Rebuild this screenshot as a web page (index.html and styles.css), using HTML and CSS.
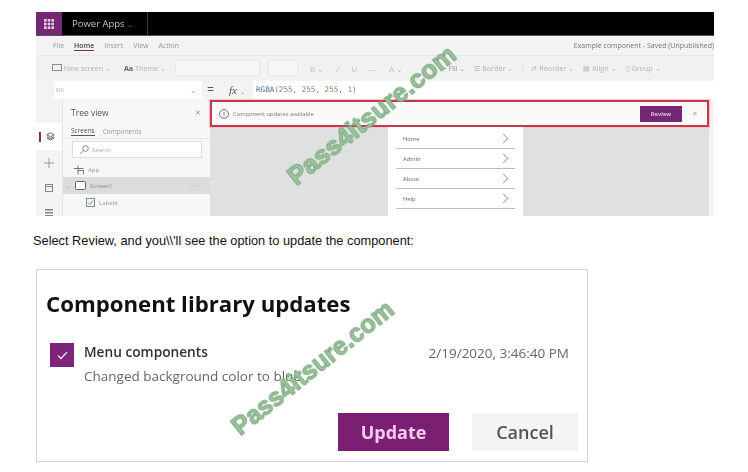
FILE: index.html
```html
<!DOCTYPE html>
<html lang="en">
<head>
    <meta charset="UTF-8">
    <meta name="viewport" content="width=device-width, initial-scale=1.0">
    <title>Component library updates</title>
    <link rel="stylesheet" href="styles.css">
</head>
<body>
    <div class="shot">
        <div class="topbar">
            <div class="waffle">
                <svg width="10" height="10" viewBox="0 0 10 10" fill="#e8cfe6"><rect width="2.6" height="2.6"/><rect x="3.7" width="2.6" height="2.6"/><rect x="7.4" width="2.6" height="2.6"/><rect y="3.7" width="2.6" height="2.6"/><rect x="3.7" y="3.7" width="2.6" height="2.6"/><rect x="7.4" y="3.7" width="2.6" height="2.6"/><rect y="7.4" width="2.6" height="2.6"/><rect x="3.7" y="7.4" width="2.6" height="2.6"/><rect x="7.4" y="7.4" width="2.6" height="2.6"/></svg>
            </div>
            <div class="app-name">Power Apps <span class="app-caret">&#8964;</span></div>
        </div>

        <div class="menubar">
            <span>File</span>
            <span class="menu-active">Home</span>
            <span>Insert</span>
            <span>View</span>
            <span>Action</span>
            <span class="saved">Example component - Saved (Unpublished)</span>
        </div>

        <div class="toolbar">
            <span class="tool">
                <svg width="10" height="8" viewBox="0 0 10 8" fill="none" stroke="#8a8a8a"><rect x=".5" y=".5" width="9" height="6"/></svg>
                New screen &#8964;
            </span>
            <span class="tool tool-theme"><b>Aa</b> Theme &#8964;</span>
            <span class="tool-select"></span>
            <span class="tool-select tool-select-small"></span>
            <span class="tool tool-letters">B &#8964;</span>
            <span class="tool tool-letters">/</span>
            <span class="tool tool-letters">U</span>
            <span class="tool tool-letters">&#8212;</span>
            <span class="tool tool-letters">A &#8964;</span>
            <span class="tool tool-fill">&#9683; Fill &#8964;</span>
            <span class="tool">&#9776; Border &#8964;</span>
            <span class="tool tool-split">&#8634; Reorder &#8964;</span>
            <span class="tool">&#9636; Align &#8964;</span>
            <span class="tool">&#9647; Group &#8964;</span>
        </div>

        <div class="formula">
            <div class="prop-box">Fill <span class="prop-caret">&#8964;</span></div>
            <span class="equals">=</span>
            <span class="fx"><i>fx</i> <small>&#8964;</small></span>
            <span class="code"><b>RGBA</b>(255, 255, 255, 1)</span>
        </div>

        <div class="workspace">
            <div class="rail">
                <div class="rail-item rail-selected">
                    <span class="rail-mark"></span>
                    <svg width="9" height="9" viewBox="0 0 9 9" fill="none" stroke="#666"><path d="M4.5.8 8.2 2.8 4.5 4.8.8 2.8Z"/><path d="M.8 4.6 4.5 6.6 8.2 4.6M.8 6 4.5 8 8.2 6"/></svg>
                </div>
                <div class="rail-item">
                    <svg width="10" height="10" viewBox="0 0 10 10" stroke="#999"><path d="M5 0v10M0 5h10"/></svg>
                </div>
                <div class="rail-item">
                    <svg width="8" height="9" viewBox="0 0 8 9" fill="none" stroke="#888"><rect x=".5" y="1.5" width="7" height="7"/><path d="M.5 3.5h7"/></svg>
                </div>
                <div class="rail-item">
                    <svg width="8" height="9" viewBox="0 0 8 9" fill="#888"><path d="M0 1h8v1.400H0zM0 4h8v1.400H0zM0 7h8v1.400H0z"/></svg>
                </div>
            </div>

            <div class="tree">
                <div class="tree-head"><span>Tree view</span><span class="tree-close">&#10005;</span></div>
                <div class="tree-tabs">
                    <span class="tree-tab-active">Screens</span>
                    <span>Components</span>
                </div>
                <div class="tree-search">
                    <svg width="9" height="9" viewBox="0 0 9 9" fill="none" stroke="#888"><circle cx="5.500" cy="3.500" r="2.800"/><path d="M3.500 5.500.5 8.500"/></svg>
                    Search
                </div>
                <div class="tree-row tree-row-app">
                    <svg width="11" height="10" viewBox="0 0 11 10" fill="none" stroke="#777"><path d="M.5 3.500h4.500v6M5 .5v3h5.500M5 5.500h5.500v4"/></svg>
                    App
                </div>
                <div class="tree-row tree-row-selected">
                    <span class="tree-caret">&#8964;</span>
                    <svg width="11" height="9" viewBox="0 0 11 9" fill="#fff" stroke="#666"><rect x=".5" y=".5" width="10" height="8" rx="1"/></svg>
                    Screen1
                    <span class="tree-more">&#8226;&#8226;&#8226;</span>
                </div>
                <div class="tree-row tree-row-child">
                    <svg width="9" height="9" viewBox="0 0 9 9" fill="none" stroke="#7d93a8"><rect x=".5" y=".5" width="8" height="8"/><path d="m2 4.500 2 2 3-4"/></svg>
                    Label4
                </div>
            </div>

            <div class="canvas">
                <div class="notice">
                    <svg width="10" height="10" viewBox="0 0 10 10" fill="none" stroke="#777"><circle cx="5" cy="5" r="4.500"/><path d="M5 2.500v3M5 6.500v1.200"/></svg>
                    <span class="notice-text">Component updates available</span>
                    <span class="review-btn">Review</span>
                    <span class="notice-close">&#10005;</span>
                </div>
                <div class="menu-card">
                    <div class="menu-row">Home <span class="chevron"></span></div>
                    <div class="menu-row">Admin <span class="chevron"></span></div>
                    <div class="menu-row">About <span class="chevron"></span></div>
                    <div class="menu-row">Help <span class="chevron"></span></div>
                </div>
            </div>
        </div>
    </div>

    <p class="caption">Select Review, and you\\'ll see the option to update the component:</p>

    <div class="dialog">
        <h2>Component library updates</h2>
        <div class="update-row">
            <span class="check">
                <svg width="11" height="9" viewBox="0 0 11 9" fill="none" stroke="#f3dff0" stroke-width="1.300"><path d="m1 4.500 3 3 6-6.500"/></svg>
            </span>
            <div class="update-info">
                <div class="update-name">Menu components</div>
                <div class="update-desc">Changed background color to blue.</div>
            </div>
            <div class="update-date">2/19/2020, 3:46:40 PM</div>
        </div>
        <div class="dialog-actions">
            <span class="btn btn-primary">Update</span>
            <span class="btn btn-cancel">Cancel</span>
        </div>
    </div>

    <div class="watermark watermark-top">Pass4itsure.com</div>
    <div class="watermark watermark-bottom">Pass4itsure.com</div>
</body>
</html>
```

FILE: styles.css
```css
* { margin: 0; padding: 0; box-sizing: border-box; }
html, body { height: 472px; overflow: hidden; }
body {
    font-family: "Liberation Sans", Arial, sans-serif;
    background: white;
    position: relative;
}

/* top screenshot */
.shot {
    width: 678px;
    height: 204px;
    margin: 12px 0 0 36px;
    overflow: hidden;
    background: #f3f3f3;
    font-family: "Open Sans", sans-serif;
    color: #8a8a8a;
    font-size: 6px;
    filter: blur(0.5px);
}
.topbar {
    height: 24px;
    background: black;
    display: flex;
    align-items: center;
    border-bottom: 1px solid #555;
}
.waffle {
    width: 26px;
    height: 23px;
    background: #742774;
    display: flex;
    align-items: center;
    justify-content: center;
}
.app-name {
    width: 86px;
    height: 23px;
    padding-left: 10px;
    line-height: 23px;
    color: #c4c4c4;
    font-size: 9.500px;
    border-right: 1px solid #3a3a3a;
}
.app-caret { color: #777; font-size: 7px; }
.menubar {
    height: 19px;
    display: flex;
    align-items: center;
    gap: 10px;
    padding: 0 0 0 17px;
    font-size: 7px;
    color: #999;
}
.menu-active {
    color: #444;
    font-weight: 600;
    border-bottom: 1px solid #8a2a5a;
}
.saved {
    margin-left: auto;
    color: #777;
    font-size: 7px;
    white-space: nowrap;
}
.toolbar {
    height: 25px;
    display: flex;
    align-items: center;
    gap: 9px;
    padding-left: 16px;
    background: #f1f1f1;
    color: #b5b5b5;
    white-space: nowrap;
    border-top: 1px solid #e8e8e8;
    font-size: 7.200px;
}
.tool svg { vertical-align: -1px; }
.tool-theme { margin-left: 4px; }
.tool-theme b { color: #666; }
.tool-select {
    width: 85px;
    height: 16px;
    background: #f7f7f7;
    border: 1px solid #e9e9e9;
}
.tool-select-small { width: 30px; margin-left: -1px; }
.tool-letters { color: #c2c2c2; font-size: 8px; margin-left: 3px; }
.tool-fill { color: #999; margin-left: 30px; }
.tool-split { padding-left: 8px; border-left: 1px solid #e4e4e4; }
.formula {
    height: 19px;
    display: flex;
    align-items: center;
    padding-left: 18px;
    background: #f3f3f3;
}
.prop-box {
    width: 148px;
    height: 18px;
    background: white;
    display: flex;
    align-items: center;
    justify-content: space-between;
    padding: 0 5px 0 2px;
    color: #aaa;
}
.prop-caret { font-size: 8px; }
.equals { width: 17px; text-align: center; font-size: 12px; color: #555; }
.fx { width: 34px; padding-left: 10px; font: 11px "Liberation Serif", serif; color: #555; }
.fx small { font: 6px "Open Sans", sans-serif; color: #888; }
.code {
    flex: 1;
    height: 18px;
    padding-left: 3px;
    background: white;
    font: 7.600px/18px "DejaVu Sans Mono", monospace;
    color: #8a7a6a;
}
.code b { color: #4a6fa0; font-weight: normal; }
.workspace {
    height: 117px;
    display: flex;
    overflow: hidden;
}
.rail {
    width: 27px;
    flex: none;
    background: #f3f3f3;
    padding-top: 24px;
    border-right: 1px solid #e6e6e6;
}
.rail-item {
    height: 25px;
    display: flex;
    align-items: center;
    justify-content: center;
}
.rail-selected {
    background: white;
    height: 27px;
    justify-content: flex-start;
    gap: 5px;
    padding-left: 3px;
}
.rail-mark {
    width: 2px;
    height: 10px;
    background: #8a2a5a;
}
.tree {
    width: 147px;
    flex: none;
    background: #f7f7f7;
    color: #888;
}
.tree-head {
    height: 23px;
    display: flex;
    align-items: center;
    justify-content: space-between;
    padding: 4px 9px 0 8px;
    font-size: 8.500px;
    color: #555;
}
.tree-close { font-size: 7px; color: #999; }
.tree-tabs {
    height: 17px;
    display: flex;
    align-items: flex-end;
    gap: 8px;
    padding: 0 0 2px 8px;
    font-size: 6.500px;
    color: #999;
    border-bottom: 1px solid #e6e6e6;
}
.tree-tab-active {
    color: #555;
    border-bottom: 1px solid #6a4a6a;
}
.tree-search {
    width: 130px;
    height: 17px;
    margin: 2px 0 0 9px;
    background: white;
    border: 1px solid #ddd;
    display: flex;
    align-items: center;
    gap: 3px;
    padding-left: 7px;
    color: #aaa;
}
.tree-row {
    height: 17px;
    display: flex;
    align-items: center;
    gap: 4px;
    padding-left: 10px;
    color: #999;
}
.tree-row-app { margin-top: 3px; }
.tree-row-selected { background: #dcdcdc; color: #888; padding-left: 3px; margin-top: -1px; }
.tree-caret { font-size: 6px; color: #aaa; }
.tree-more { margin-left: auto; padding-right: 12px; color: #aaa; font-size: 4px; letter-spacing: 1px; }
.tree-row-child { padding-left: 23px; }
.canvas {
    flex: 1;
    background: #dfe0e0;
    margin-right: 5px;
}
.notice {
    height: 27px;
    margin-top: 1px;
    background: #fafafa;
    border: 2px solid #c0394f;
    box-shadow: 0 0 1px 1px #f4c4cc;
    display: flex;
    align-items: center;
    padding: 0 9px 0 7px;
    color: #777;
    font-size: 5.800px;
}
.notice-text { margin-left: 4px; flex: 1; }
.review-btn {
    width: 42px;
    height: 16px;
    background: #742774;
    color: #e8cfe6;
    font-size: 6px;
    font-weight: 600;
    display: flex;
    align-items: center;
    justify-content: center;
}
.notice-close { margin-left: 10px; font-size: 7px; color: #aaa; }
.menu-card {
    width: 135px;
    margin-left: 178px;
    height: 92px;
    background: white;
    padding: 2px 8px 0;
    color: #666;
    font-size: 5.800px;
}
.menu-row {
    height: 20px;
    display: flex;
    align-items: center;
    justify-content: space-between;
    padding: 0 6px 0 7px;
    border-bottom: 1px solid #bbb;
}
.chevron {
    width: 7px;
    height: 7px;
    border-top: 1px solid #aaa;
    border-right: 1px solid #aaa;
    transform: rotate(45deg);
    margin-right: 2px;
}

.caption {
    margin: 18px 0 0 33px;
    font-size: 12.800px;
    line-height: 14px;
    color: #111;
    white-space: nowrap;
}

/* dialog screenshot */
.dialog {
    width: 552px;
    height: 193px;
    margin: 21px 0 0 36px;
    border: 1px solid #d4d4d4;
    font-family: "Open Sans", sans-serif;
    padding: 0 9px 0 9px;
    filter: blur(0.35px);
}
.dialog h2 {
    margin-top: 18px;
    font-size: 22.200px;
    line-height: 31px;
    font-weight: 700;
    color: #111;
    white-space: nowrap;
}
.update-row {
    display: flex;
    margin: 23px 9px 0 4px;
}
.check {
    width: 24px;
    height: 24px;
    margin-top: 1px;
    background: #7b2478;
    display: flex;
    align-items: center;
    justify-content: center;
}
.update-info { margin-left: 10px; flex: 1; }
.update-name {
    font-size: 13.700px;
    line-height: 20px;
    font-weight: 600;
    color: #333;
}
.update-desc {
    margin-top: 4px;
    font-size: 13.500px;
    line-height: 20px;
    color: #666;
}
.update-date {
    font-size: 13.500px;
    line-height: 22px;
    color: #666;
}
.dialog-actions {
    display: flex;
    justify-content: flex-end;
    gap: 23px;
    margin-top: 27px;
}
.btn {
    width: 106px;
    height: 38px;
    background: #f4f4f4;
    color: #555;
    font-size: 18px;
    font-weight: 700;
    display: flex;
    align-items: center;
    justify-content: center;
}
.btn-cancel { font-weight: 600; }
.btn-primary {
    width: 111px;
    background: #7b1f72;
    color: #f6c9ee;
}

/* watermarks lie over both screenshots */
.watermark {
    position: absolute;
    font-size: 26px;
    line-height: 30px;
    font-weight: bold;
    color: #9cc49c;
    -webkit-text-stroke: 1px #79a67e;
    white-space: nowrap;
    transform: rotate(-38.500deg);
    transform-origin: left bottom;
    filter: blur(0.4px);
}
.watermark-top { left: 300px; top: 161px; }
.watermark-bottom { left: 244px; top: 411px; font-size: 25px; }
```
